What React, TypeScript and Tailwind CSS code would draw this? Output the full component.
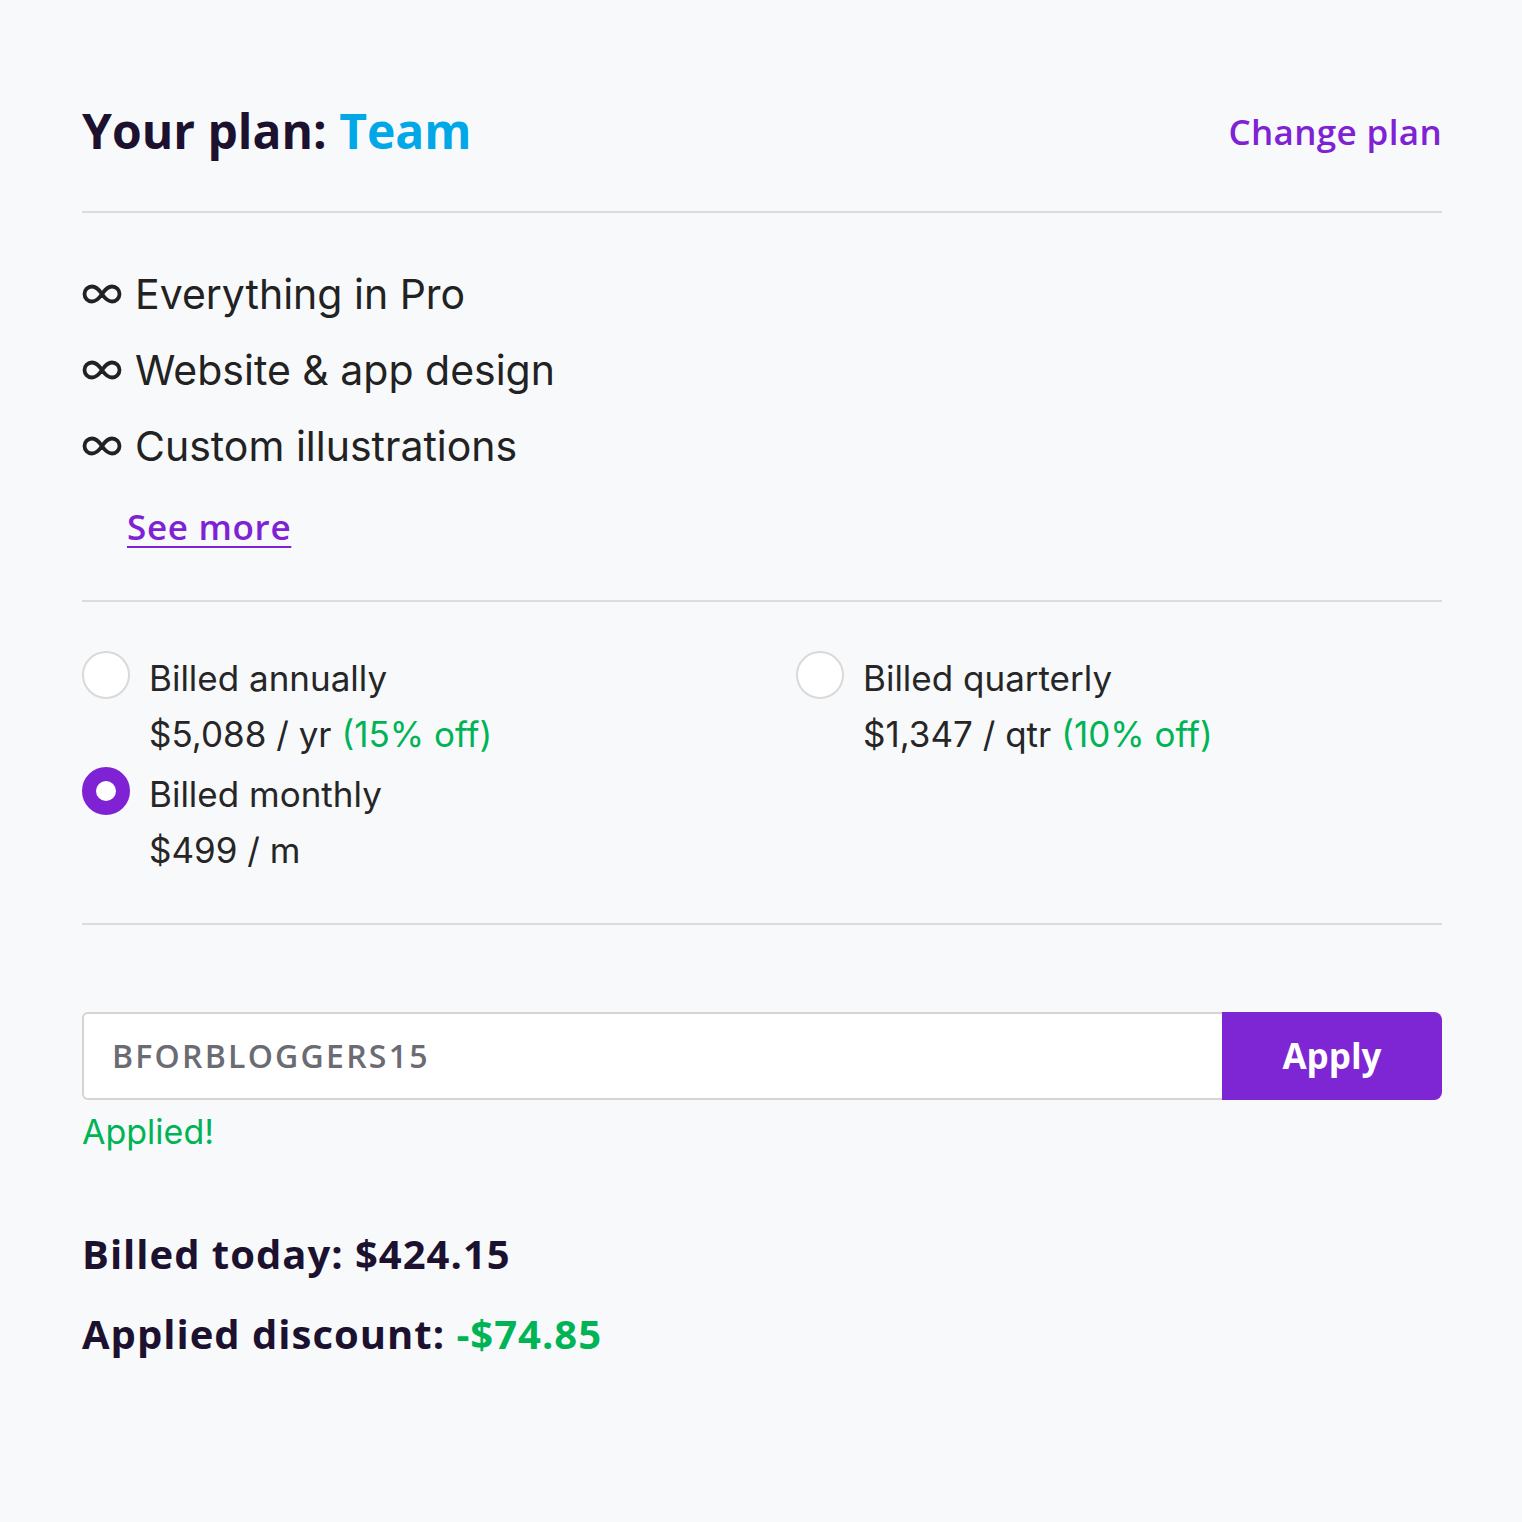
const heading = "font-['Open_Sans','Liberation_Sans',sans-serif]";
const body = "font-['Inter','Liberation_Sans',sans-serif]";

const features = ['Everything in Pro', 'Website & app design', 'Custom illustrations'];

const Infinity = () => (
  <svg width="40" height="22" viewBox="0 0 40 22" className="shrink-0">
    <path
      d="M20 11c-3-4.5-6-7.5-10-7.5a7.5 7.5 0 0 0 0 15c4 0 7-3 10-7.5s6-7.5 10-7.5a7.5 7.5 0 0 1 0 15c-4 0-7-3-10-7.5z"
      fill="none"
      stroke="#222"
      strokeWidth="3.8"
    />
  </svg>
);

const Radio = ({ checked }: { checked?: boolean }) =>
  checked ? (
    <span className="w-12 h-12 rounded-full border-[14px] border-[#7e22d4] bg-white shrink-0" />
  ) : (
    <span className="w-12 h-12 rounded-full border-2 border-[#d9d9d9] bg-white shrink-0" />
  );

const Option = ({
  label,
  price,
  off,
  checked,
}: {
  label: string;
  price: string;
  off?: string;
  checked?: boolean;
}) => (
  <div className="flex flex-col">
    <div className="flex items-center gap-[19px] h-[56px]">
      <Radio checked={checked} />
      <span className="text-[35px] text-[#262626] leading-none pt-[6px]">{label}</span>
    </div>
    <div className="pl-[67px] h-[60px] flex items-center text-[35px] text-[#262626] leading-none pt-[2px]">
      {price}
      {off && <span className="text-[#00b456] ml-[10px]">{off}</span>}
    </div>
  </div>
);

export default function App() {
  return (
    <div className={`min-h-[1522px] bg-[#f8f9fb] pl-[82px] pr-[80px] pt-[98px] ${body}`}>
      <div className="flex items-center justify-between h-[66px]">
        <h1 className={`${heading} text-[48px] font-bold text-[#1c1230] leading-none`}>
          Your plan: <span className="text-[#00a8e8]">Team</span>
        </h1>
        <a className={`${heading} text-[35px] font-semibold text-[#7e22d4] leading-none tracking-[0.01em]`}>
          Change plan
        </a>
      </div>

      <div className="border-t-2 border-[#dcdcdc] mt-[47px]" />

      <ul className="pt-[43px] flex flex-col">
        {features.map((f) => (
          <li key={f} className="flex items-center gap-[13px] h-[76px]">
            <Infinity />
            <span className="text-[41px] text-[#222] leading-none">{f}</span>
          </li>
        ))}
      </ul>

      <a
        className={`${heading} block ml-[45px] mt-[25px] text-[35px] font-semibold text-[#7e22d4] underline underline-offset-[6px] decoration-2 leading-none tracking-[0.02em]`}
      >
        See more
      </a>

      <div className="border-t-2 border-[#dcdcdc] mt-[56px]" />

      <div className="grid grid-cols-2 pt-[45px] pb-[44px]">
        <div className="flex flex-col">
          <Option label="Billed annually" price="$5,088 / yr" off="(15% off)" />
          <Option label="Billed monthly" price="$499 / m" checked />
        </div>
        <div className="flex flex-col pl-[34px]">
          <Option label="Billed quarterly" price="$1,347 / qtr" off="(10% off)" />
        </div>
      </div>

      <div className="border-t-2 border-[#dcdcdc]" />

      <div className="flex mt-[87px] h-[88px]">
        <div
          className={`flex-1 flex items-center bg-white border-2 border-r-0 border-[#d4d4d4] rounded-l-[6px] pl-[28px] ${heading} text-[32px] font-semibold text-[#6b6b73] tracking-[0.07em]`}
        >
          BFORBLOGGERS15
        </div>
        <button
          className={`w-[220px] bg-[#7e26d3] rounded-r-[8px] text-white ${heading} text-[35px] font-bold`}
        >
          Apply
        </button>
      </div>
      <p className="text-[34px] text-[#00b456] mt-[15px] leading-none">Applied!</p>

      <div className={`${heading} font-bold text-[40px] text-[#1c1230] leading-none mt-[85px] tracking-[0.025em]`}>
        Billed today: $424.15
      </div>
      <div className={`${heading} font-bold text-[40px] text-[#1c1230] leading-none mt-[40px] tracking-[0.025em]`}>
        Applied discount: <span className="text-[#00b456]">-$74.85</span>
      </div>
    </div>
  );
}
